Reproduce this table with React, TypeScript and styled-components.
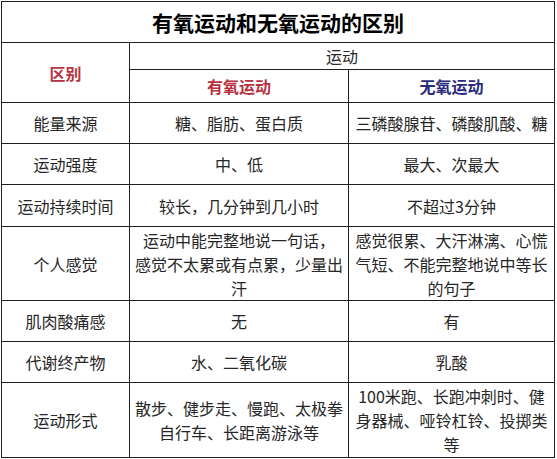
import React from "react";
import styled, { createGlobalStyle } from "styled-components";

const GlobalStyle = createGlobalStyle`
  html, body {
    margin: 0;
    padding: 0;
    background: #fff;
  }
  body {
    font-family: "Microsoft YaHei", "Noto Sans CJK SC", "Noto Sans", sans-serif;
    color: #262626;
  }
`;

const Table = styled.table`
  border-collapse: collapse;
  margin: 1px 0 0 1px;
  width: 553px;
  table-layout: fixed;
  border: 1px solid #1e1e1e;

  td {
    border: 1px solid #1e1e1e;
    padding: 0 4px;
    text-align: center;
    vertical-align: middle;
    font-size: 16px;
    line-height: 24px;
    box-sizing: border-box;
  }
`;

const TitleCell = styled.td`
  && {
    font-size: 21px;
    font-weight: 700;
    color: #000;
    line-height: 28px;
  }
`;

const HeadCell = styled.td<{ $tone?: "red" | "blue" }>`
  && {
    color: ${(p) =>
      p.$tone === "red" ? "#b83240" : p.$tone === "blue" ? "#2b2a7e" : "#262626"};
    font-weight: ${(p) => (p.$tone ? 700 : 400)};
  }
`;

const Row = styled.tr<{ $h: number }>`
  height: ${(p) => p.$h}px;
`;

type Line = string[];

const rows: { label: string; aerobic: Line; anaerobic: Line; h: number }[] = [
  { label: "能量来源", aerobic: ["糖、脂肪、蛋白质"], anaerobic: ["三磷酸腺苷、磷酸肌酸、糖"], h: 41 },
  { label: "运动强度", aerobic: ["中、低"], anaerobic: ["最大、次最大"], h: 41 },
  { label: "运动持续时间", aerobic: ["较长，几分钟到几小时"], anaerobic: ["不超过3分钟"], h: 42 },
  {
    label: "个人感觉",
    aerobic: ["运动中能完整地说一句话，", "感觉不太累或有点累，少量出", "汗"],
    anaerobic: ["感觉很累、大汗淋漓、心慌", "气短、不能完整地说中等长", "的句子"],
    h: 74,
  },
  { label: "肌肉酸痛感", aerobic: ["无"], anaerobic: ["有"], h: 41 },
  { label: "代谢终产物", aerobic: ["水、二氧化碳"], anaerobic: ["乳酸"], h: 41 },
  {
    label: "运动形式",
    aerobic: ["散步、健步走、慢跑、太极拳", "自行车、长距离游泳等"],
    anaerobic: ["100米跑、长跑冲刺时、健", "身器械、哑铃杠铃、投掷类", "等"],
    h: 75,
  },
];

function Lines({ lines }: { lines: Line }) {
  return (
    <>
      {lines.map((l, i) => (
        <React.Fragment key={i}>
          {i > 0 && <br />}
          {l}
        </React.Fragment>
      ))}
    </>
  );
}

export default function App() {
  return (
    <>
      <GlobalStyle />
      <Table>
        <colgroup>
          <col style={{ width: 128 }} />
          <col style={{ width: 219 }} />
          <col style={{ width: 206 }} />
        </colgroup>
        <tbody>
          <Row $h={41}>
            <TitleCell colSpan={3}>有氧运动和无氧运动的区别</TitleCell>
          </Row>
          <Row $h={27}>
            <HeadCell rowSpan={2} $tone="red">
              区别
            </HeadCell>
            <HeadCell colSpan={2}>运动</HeadCell>
          </Row>
          <Row $h={33}>
            <HeadCell $tone="red">有氧运动</HeadCell>
            <HeadCell $tone="blue">无氧运动</HeadCell>
          </Row>
          {rows.map((r) => (
            <Row key={r.label} $h={r.h}>
              <td>{r.label}</td>
              <td>
                <Lines lines={r.aerobic} />
              </td>
              <td>
                <Lines lines={r.anaerobic} />
              </td>
            </Row>
          ))}
        </tbody>
      </Table>
    </>
  );
}
